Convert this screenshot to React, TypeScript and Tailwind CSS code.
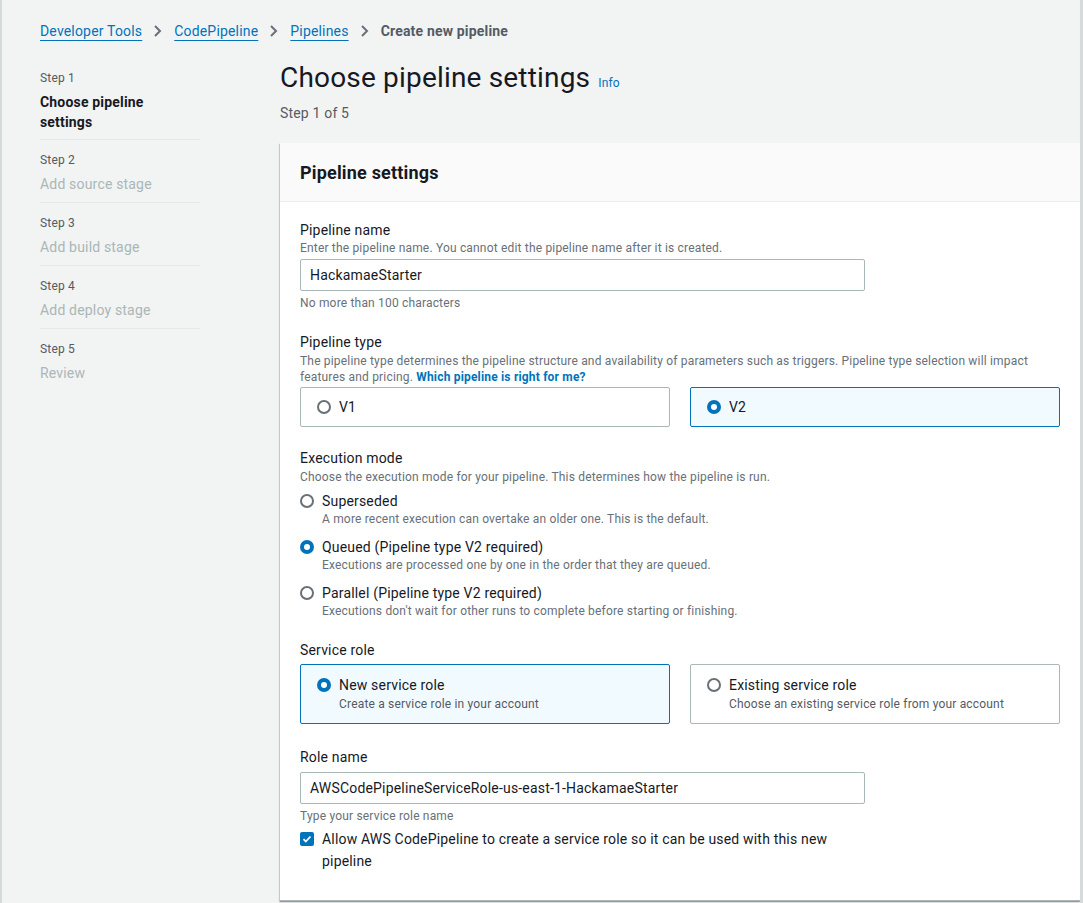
import React from 'react'

const font = { fontFamily: 'Roboto, "Liberation Sans", sans-serif' }

function Radio({ checked }: { checked?: boolean }) {
  return checked ? (
    <span className="w-[14px] h-[14px] rounded-full bg-[#0073bb] flex items-center justify-center shrink-0">
      <span className="w-[6px] h-[6px] rounded-full bg-white" />
    </span>
  ) : (
    <span className="w-[14px] h-[14px] rounded-full border-2 border-[#687078] bg-white shrink-0" />
  )
}

function Tile({ label, desc, checked }: { label: string; desc?: string; checked?: boolean }) {
  return (
    <div
      className={
        checked
          ? 'flex-1 border border-[#0073bb] bg-[#f1faff] rounded-[2px] px-[16px] py-[10px]'
          : 'flex-1 border border-[#aab7b8] bg-white rounded-[2px] px-[16px] py-[10px]'
      }
    >
      <div className={desc ? 'flex items-center gap-[8px] h-[20px]' : 'flex items-center gap-[8px] h-[18px]'}>
        <Radio checked={checked} />
        <span className="text-[14px] text-[#16191f]">{label}</span>
      </div>
      {desc && <div className="pl-[22px] text-[12px] text-[#545b64] leading-[18px]">{desc}</div>}
    </div>
  )
}

const steps = [
  { n: 'Step 2', t: 'Add source stage' },
  { n: 'Step 3', t: 'Add build stage' },
  { n: 'Step 4', t: 'Add deploy stage' },
  { n: 'Step 5', t: 'Review' },
]

const modes = [
  { t: 'Superseded', d: 'A more recent execution can overtake an older one. This is the default.' },
  { t: 'Queued (Pipeline type V2 required)', d: 'Executions are processed one by one in the order that they are queued.', c: true },
  { t: 'Parallel (Pipeline type V2 required)', d: "Executions don't wait for other runs to complete before starting or finishing." },
]

export default function App() {
  return (
    <div style={font} className="bg-[#f2f3f3] h-[903px] overflow-hidden border-l-2 border-[#d5dbdb] border-r-[3px] border-r-[#d5dbdb] text-[#16191f] tracking-[0.18px]">
      {/* BREADCRUMB */}
      <div className="flex items-center pl-[38px] pt-[18px] h-[44px] text-[14px]">
        {['Developer Tools', 'CodePipeline', 'Pipelines'].map((b) => (
          <React.Fragment key={b}>
            <a href="#" className="text-[#0073bb] underline underline-offset-[4px] decoration-[1px]">{b}</a>
            <svg width="24" height="16" viewBox="0 0 24 16" className="mx-[4px]">
              <path d="M9 3l5 5-5 5" fill="none" stroke="#687078" strokeWidth="2" />
            </svg>
          </React.Fragment>
        ))}
        <span className="font-bold text-[#545b64]">Create new pipeline</span>
      </div>

      <div className="flex pl-[38px] pt-[26px]">
        {/* SIDEBAR */}
        <div className="w-[160px] shrink-0">
          <div className="text-[12px] text-[#545b64] leading-[16px]">Step 1</div>
          <div className="mt-[6px] text-[14px] font-bold leading-[20px] pb-[7px] border-b border-[#e5e8e8]">
            Choose pipeline
            <br />
            settings
          </div>
          {steps.map((s) => (
            <div key={s.n} className="pt-[12px] pb-[8px] border-b border-[#e5e8e8] last:border-b-0">
              <div className="text-[12px] text-[#545b64] leading-[16px]">{s.n}</div>
              <div className="mt-[6px] text-[14px] text-[#aab7b8] leading-[20px]">{s.t}</div>
            </div>
          ))}
        </div>

        {/* MAIN */}
        <div className="ml-[80px] flex-1">
          <div className="flex items-baseline gap-[8px] -mt-[10px]">
            <h1 className="text-[28px] leading-[36px] text-[#16191f]">Choose pipeline settings</h1>
            <a href="#" className="text-[12px] text-[#0073bb]">Info</a>
          </div>
          <div className="text-[14px] text-[#545b64] mt-[7px]">Step 1 of 5</div>

          <div className="mt-[19px] bg-white border-b border-[#aab7b8] shadow-[0_1px_1px_0_rgba(0,28,36,0.3),-1px_1px_1px_0_rgba(0,28,36,0.15)]">
            <div className="bg-[#fafafa] border-b border-[#eaeded] px-[20px] h-[59px] flex items-center">
              <h2 className="text-[18px] font-bold">Pipeline settings</h2>
            </div>

            <div className="px-[20px] pt-[17px] pb-[28px]">
              {/* PIPELINE NAME */}
              <div className="text-[14px] leading-[22px]">Pipeline name</div>
              <div className="text-[12px] text-[#687078] leading-[14px]">
                Enter the pipeline name. You cannot edit the pipeline name after it is created.
              </div>
              <div className="mt-[4px] w-[565px] h-[32px] border border-[#aab7b8] rounded-[2px] px-[9px] flex items-center text-[14px]">
                HackamaeStarter
              </div>
              <div className="text-[12px] text-[#687078] mt-[4px] leading-[16px]">No more than 100 characters</div>

              {/* PIPELINE TYPE */}
              <div className="mt-[20px] text-[14px] leading-[22px]">Pipeline type</div>
              <div className="text-[12px] text-[#687078] leading-[16px]">
                The pipeline type determines the pipeline structure and availability of parameters such as triggers. Pipeline type selection will impact features and pricing.{' '}
                <a href="#" className="font-bold text-[#0073bb]">Which pipeline is right for me?</a>
              </div>
              <div className="flex gap-[20px] mt-[2px]">
                <Tile label="V1" />
                <Tile label="V2" checked />
              </div>

              {/* EXECUTION MODE */}
              <div className="mt-[20px] text-[14px] leading-[22px]">Execution mode</div>
              <div className="text-[12px] text-[#687078] leading-[16px]">
                Choose the execution mode for your pipeline. This determines how the pipeline is run.
              </div>
              <div className="mt-[6px] flex flex-col gap-[10px]">
                {modes.map((m) => (
                  <div key={m.t}>
                    <div className="flex items-center gap-[8px] h-[20px]">
                      <Radio checked={m.c} />
                      <span className="text-[14px]">{m.t}</span>
                    </div>
                    <div className="pl-[22px] text-[12px] text-[#687078] leading-[16px]">{m.d}</div>
                  </div>
                ))}
              </div>

              {/* SERVICE ROLE */}
              <div className="mt-[20px] text-[14px] leading-[22px]">Service role</div>
              <div className="flex gap-[20px] mt-[3px]">
                <Tile label="New service role" desc="Create a service role in your account" checked />
                <Tile label="Existing service role" desc="Choose an existing service role from your account" />
              </div>

              {/* ROLE NAME */}
              <div className="mt-[22px] text-[14px] leading-[22px]">Role name</div>
              <div className="mt-[4px] w-[565px] h-[32px] border border-[#aab7b8] rounded-[2px] px-[9px] flex items-center text-[14px]">
                AWSCodePipelineServiceRole-us-east-1-HackamaeStarter
              </div>
              <div className="text-[12px] text-[#687078] mt-[4px] leading-[16px]">Type your service role name</div>
              <div className="flex gap-[8px] mt-[4px] w-[540px]">
                <span className="mt-[4px] w-[14px] h-[14px] rounded-[2px] bg-[#0073bb] flex items-center justify-center shrink-0">
                  <svg width="10" height="10" viewBox="0 0 10 10">
                    <path d="M1.5 5.2l2.3 2.3 4.7-5" fill="none" stroke="white" strokeWidth="1.8" />
                  </svg>
                </span>
                <span className="text-[14px] leading-[22px]">
                  Allow AWS CodePipeline to create a service role so it can be used with this new pipeline
                </span>
              </div>
            </div>
          </div>
        </div>
      </div>
    </div>
  )
}
